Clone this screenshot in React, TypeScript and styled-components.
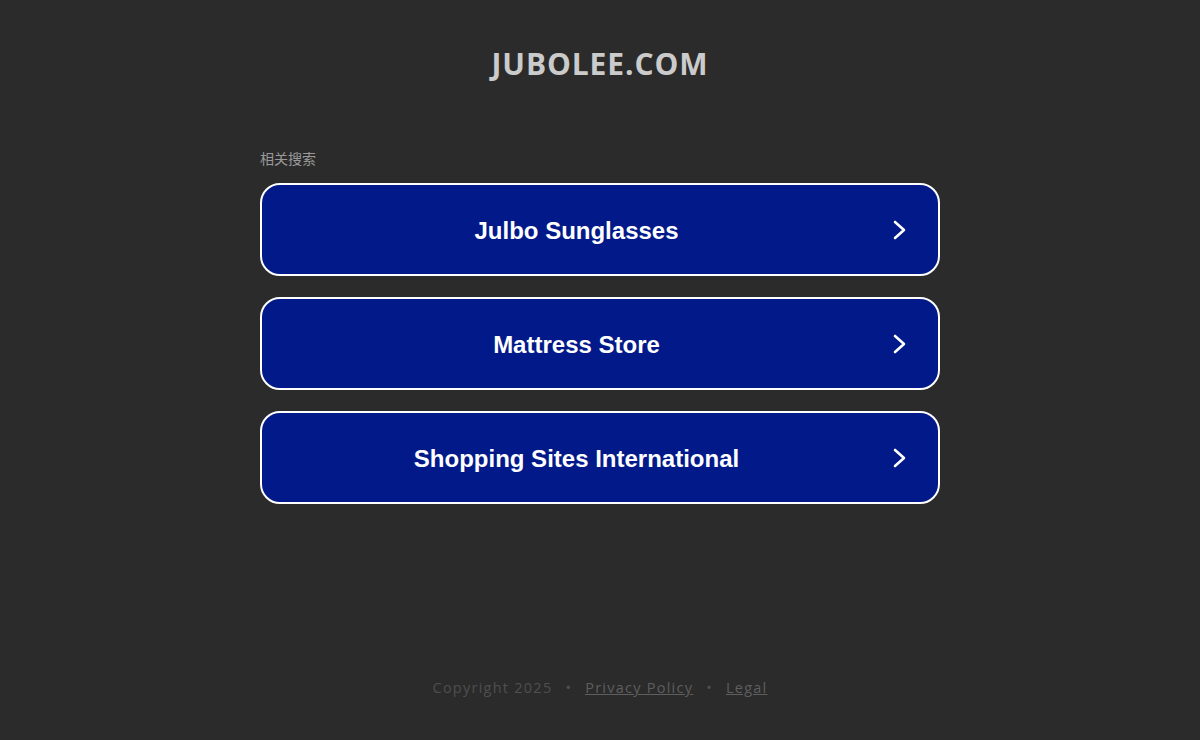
import React from 'react';
import styled, { createGlobalStyle } from 'styled-components';

const GlobalStyle = createGlobalStyle`
  html, body {
    margin: 0;
    padding: 0;
    background: #2b2b2b;
  }
`;

const searches = ['Julbo Sunglasses', 'Mattress Store', 'Shopping Sites International'];

const Page = styled.div`
  min-height: 740px;
  display: flex;
  flex-direction: column;
  align-items: center;
  background: #2b2b2b;
  font-family: 'Open Sans', 'Liberation Sans', sans-serif;
`;

const Title = styled.h1`
  margin: 0;
  padding-top: 46px;
  font-size: 30px;
  line-height: 36px;
  font-weight: 700;
  color: #cbcbcb;
  letter-spacing: 0.9px;
`;

const Main = styled.main`
  width: 680px;
  margin-top: 68px;
  display: flex;
  flex-direction: column;
`;

const Label = styled.div`
  font-family: 'Noto Sans CJK SC', 'Noto Sans', sans-serif;
  font-size: 14px;
  line-height: 16px;
  color: #9a9a9a;
  margin-bottom: 17px;
`;

const List = styled.div`
  display: flex;
  flex-direction: column;
  gap: 21px;
`;

const SearchLink = styled.a`
  display: flex;
  align-items: center;
  height: 93px;
  box-sizing: border-box;
  border: 2px solid #ffffff;
  border-radius: 20px;
  background: #011989;
  color: #ffffff;
  text-decoration: none;
  padding-right: 29px;
  cursor: pointer;
`;

const LinkText = styled.span`
  flex: 1;
  text-align: center;
  font-family: 'Liberation Sans', Arial, sans-serif;
  font-weight: 700;
  font-size: 24px;
  line-height: 28px;
  padding-top: 2px;
`;

const Arrow = styled.svg`
  width: 18px;
  height: 20px;
  flex-shrink: 0;
`;

const Footer = styled.footer`
  margin-top: auto;
  padding-bottom: 42px;
  font-size: 14.5px;
  line-height: 20px;
  letter-spacing: 1.25px;
  color: #4f4f4f;
`;

const Dot = styled.span`
  margin: 0 13px;
`;

const FooterLink = styled.a`
  color: #5e5e5e;
  text-decoration: underline;
`;

export default function App() {
  return (
    <>
      <GlobalStyle />
      <Page>
        <Title>JUBOLEE.COM</Title>
        <Main>
          <Label>相关搜索</Label>
          <List>
            {searches.map(s => (
              <SearchLink key={s}>
                <LinkText>{s}</LinkText>
                <Arrow viewBox="0 0 18 20">
                  <path d="M4 2 L13 10 L4 18" fill="none" stroke="#fff" strokeWidth="2.6" strokeLinecap="round" strokeLinejoin="round" />
                </Arrow>
              </SearchLink>
            ))}
          </List>
        </Main>
        <Footer>
          Copyright 2025<Dot>•</Dot>
          <FooterLink>Privacy Policy</FooterLink>
          <Dot>•</Dot>
          <FooterLink>Legal</FooterLink>
        </Footer>
      </Page>
    </>
  );
}
